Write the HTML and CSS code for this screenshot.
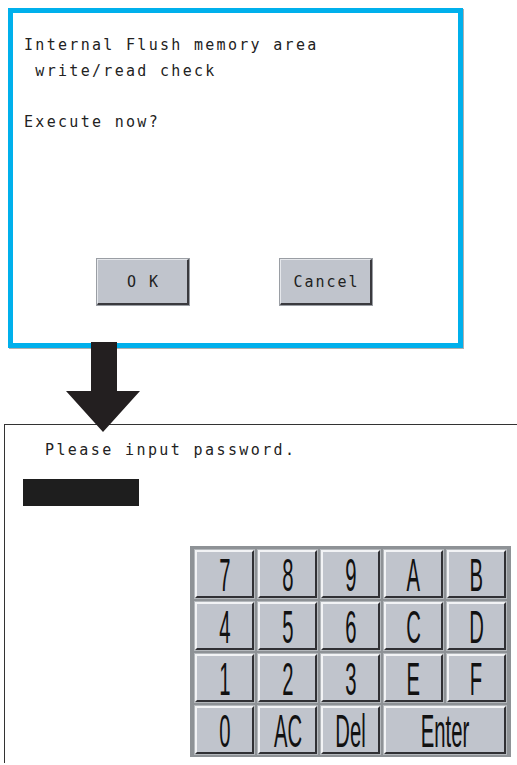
FILE: index.html
```html
<!DOCTYPE html>
<html>
<head>
<meta charset="utf-8">
<link rel="stylesheet" href="styles.css">
</head>
<body>
<div class="dialog">
  <div class="msg">
    <div class="line">Internal Flush memory area</div>
    <div class="line"> write/read check</div>
    <div class="line">&nbsp;</div>
    <div class="line">Execute now?</div>
  </div>
  <div class="btns">
    <div class="btn">O K</div>
    <div class="btn">Cancel</div>
  </div>
</div>
<div class="lower">
  <svg class="arrow" width="74" height="92" viewBox="0 0 74 92">
    <polygon points="25,0 51,0 51,49 74,49 37,90 0,49 25,49" fill="#231f20"/>
  </svg>
  <div class="panel">
    <div class="prompt">Please input password.</div>
    <div class="pwbar"></div>
    <div class="keypad">
      <div class="key"><span>7</span></div>
      <div class="key"><span>8</span></div>
      <div class="key"><span>9</span></div>
      <div class="key"><span>A</span></div>
      <div class="key"><span>B</span></div>
      <div class="key"><span>4</span></div>
      <div class="key"><span>5</span></div>
      <div class="key"><span>6</span></div>
      <div class="key"><span>C</span></div>
      <div class="key"><span>D</span></div>
      <div class="key"><span>1</span></div>
      <div class="key"><span>2</span></div>
      <div class="key"><span>3</span></div>
      <div class="key"><span>E</span></div>
      <div class="key"><span>F</span></div>
      <div class="key"><span>0</span></div>
      <div class="key"><span>AC</span></div>
      <div class="key"><span>Del</span></div>
      <div class="key wide"><span>Enter</span></div>
    </div>
  </div>
</div>
</body>
</html>
```
FILE: styles.css
```css
html, body {
  margin: 0;
  padding: 0;
  background: #fff;
  overflow: hidden;
  width: 517px;
  height: 765px;
}
body {
  font-family: "DejaVu Sans Mono", "Liberation Mono", monospace;
  color: #222;
}
.dialog {
  margin: 8px 0 0 8px;
  width: 445px;
  border: 5px solid #00b0ec;
  box-shadow: 1px 1px 0 #b0b0b0;
  display: flex;
  flex-direction: column;
  justify-content: space-between;
  padding: 0 0 38px 0;
  box-sizing: content-box;
  height: 292px;
}
.msg {
  padding: 20px 0 0 11px;
  font-size: 15px;
  letter-spacing: 2.3px;
}
.line {
  height: 25.5px;
  line-height: 25.5px;
  white-space: pre;
}
.btns {
  display: flex;
  gap: 91px;
  padding-left: 84px;
}
.btn {
  width: 92px;
  height: 46px;
  box-sizing: border-box;
  background: #c0c4cc;
  border-top: 1px solid #e6e8ec;
  border-left: 1px solid #e6e8ec;
  border-right: 2px solid #3a3a3e;
  border-bottom: 2px solid #3a3a3e;
  outline: 1px solid #9a9ea4;
  display: flex;
  align-items: center;
  justify-content: center;
  font-size: 15px;
  letter-spacing: 2px;
  padding-left: 2px;
}
.lower {
  position: relative;
  margin-top: 76px;
  margin-left: 4px;
}
.arrow {
  position: absolute;
  left: 62px;
  top: -82px;
  z-index: 2;
}
.panel {
  width: 513px;
  height: 339px;
  box-sizing: border-box;
  border-top: 1.5px solid #333;
  border-left: 1.5px solid #333;
}
.prompt {
  padding: 16px 0 0 40px;
  font-size: 15px;
  letter-spacing: 2.4px;
  line-height: 18px;
  white-space: pre;
}
.pwbar {
  margin: 20px 0 0 18px;
  width: 116px;
  height: 27px;
  background: #1e1e1e;
}
.keypad {
  margin: 40px 0 0 185px;
  width: 321px;
  box-sizing: border-box;
  padding: 4px 5px 3px 5px;
  background: #8e9296;
  display: grid;
  grid-template-columns: repeat(5, 59px);
  grid-auto-rows: 48px;
  gap: 4px;
}
.key {
  box-sizing: border-box;
  background: #c0c4cc;
  border-top: 2px solid #f2f3f5;
  border-left: 2px solid #f2f3f5;
  border-right: 2px solid #303034;
  border-bottom: 2px solid #303034;
  box-shadow: 0 0 0 1px #b4b8bc;
  display: flex;
  align-items: center;
  justify-content: center;
}
.key.wide {
  grid-column: span 2;
}
.key span {
  font-family: "Liberation Sans", Arial, sans-serif;
  font-size: 46px;
  line-height: 36px;
  height: 36px;
  color: #111;
  transform: scale(0.44, 1.0);
  display: inline-block;
  padding-top: 2px;
}
```
